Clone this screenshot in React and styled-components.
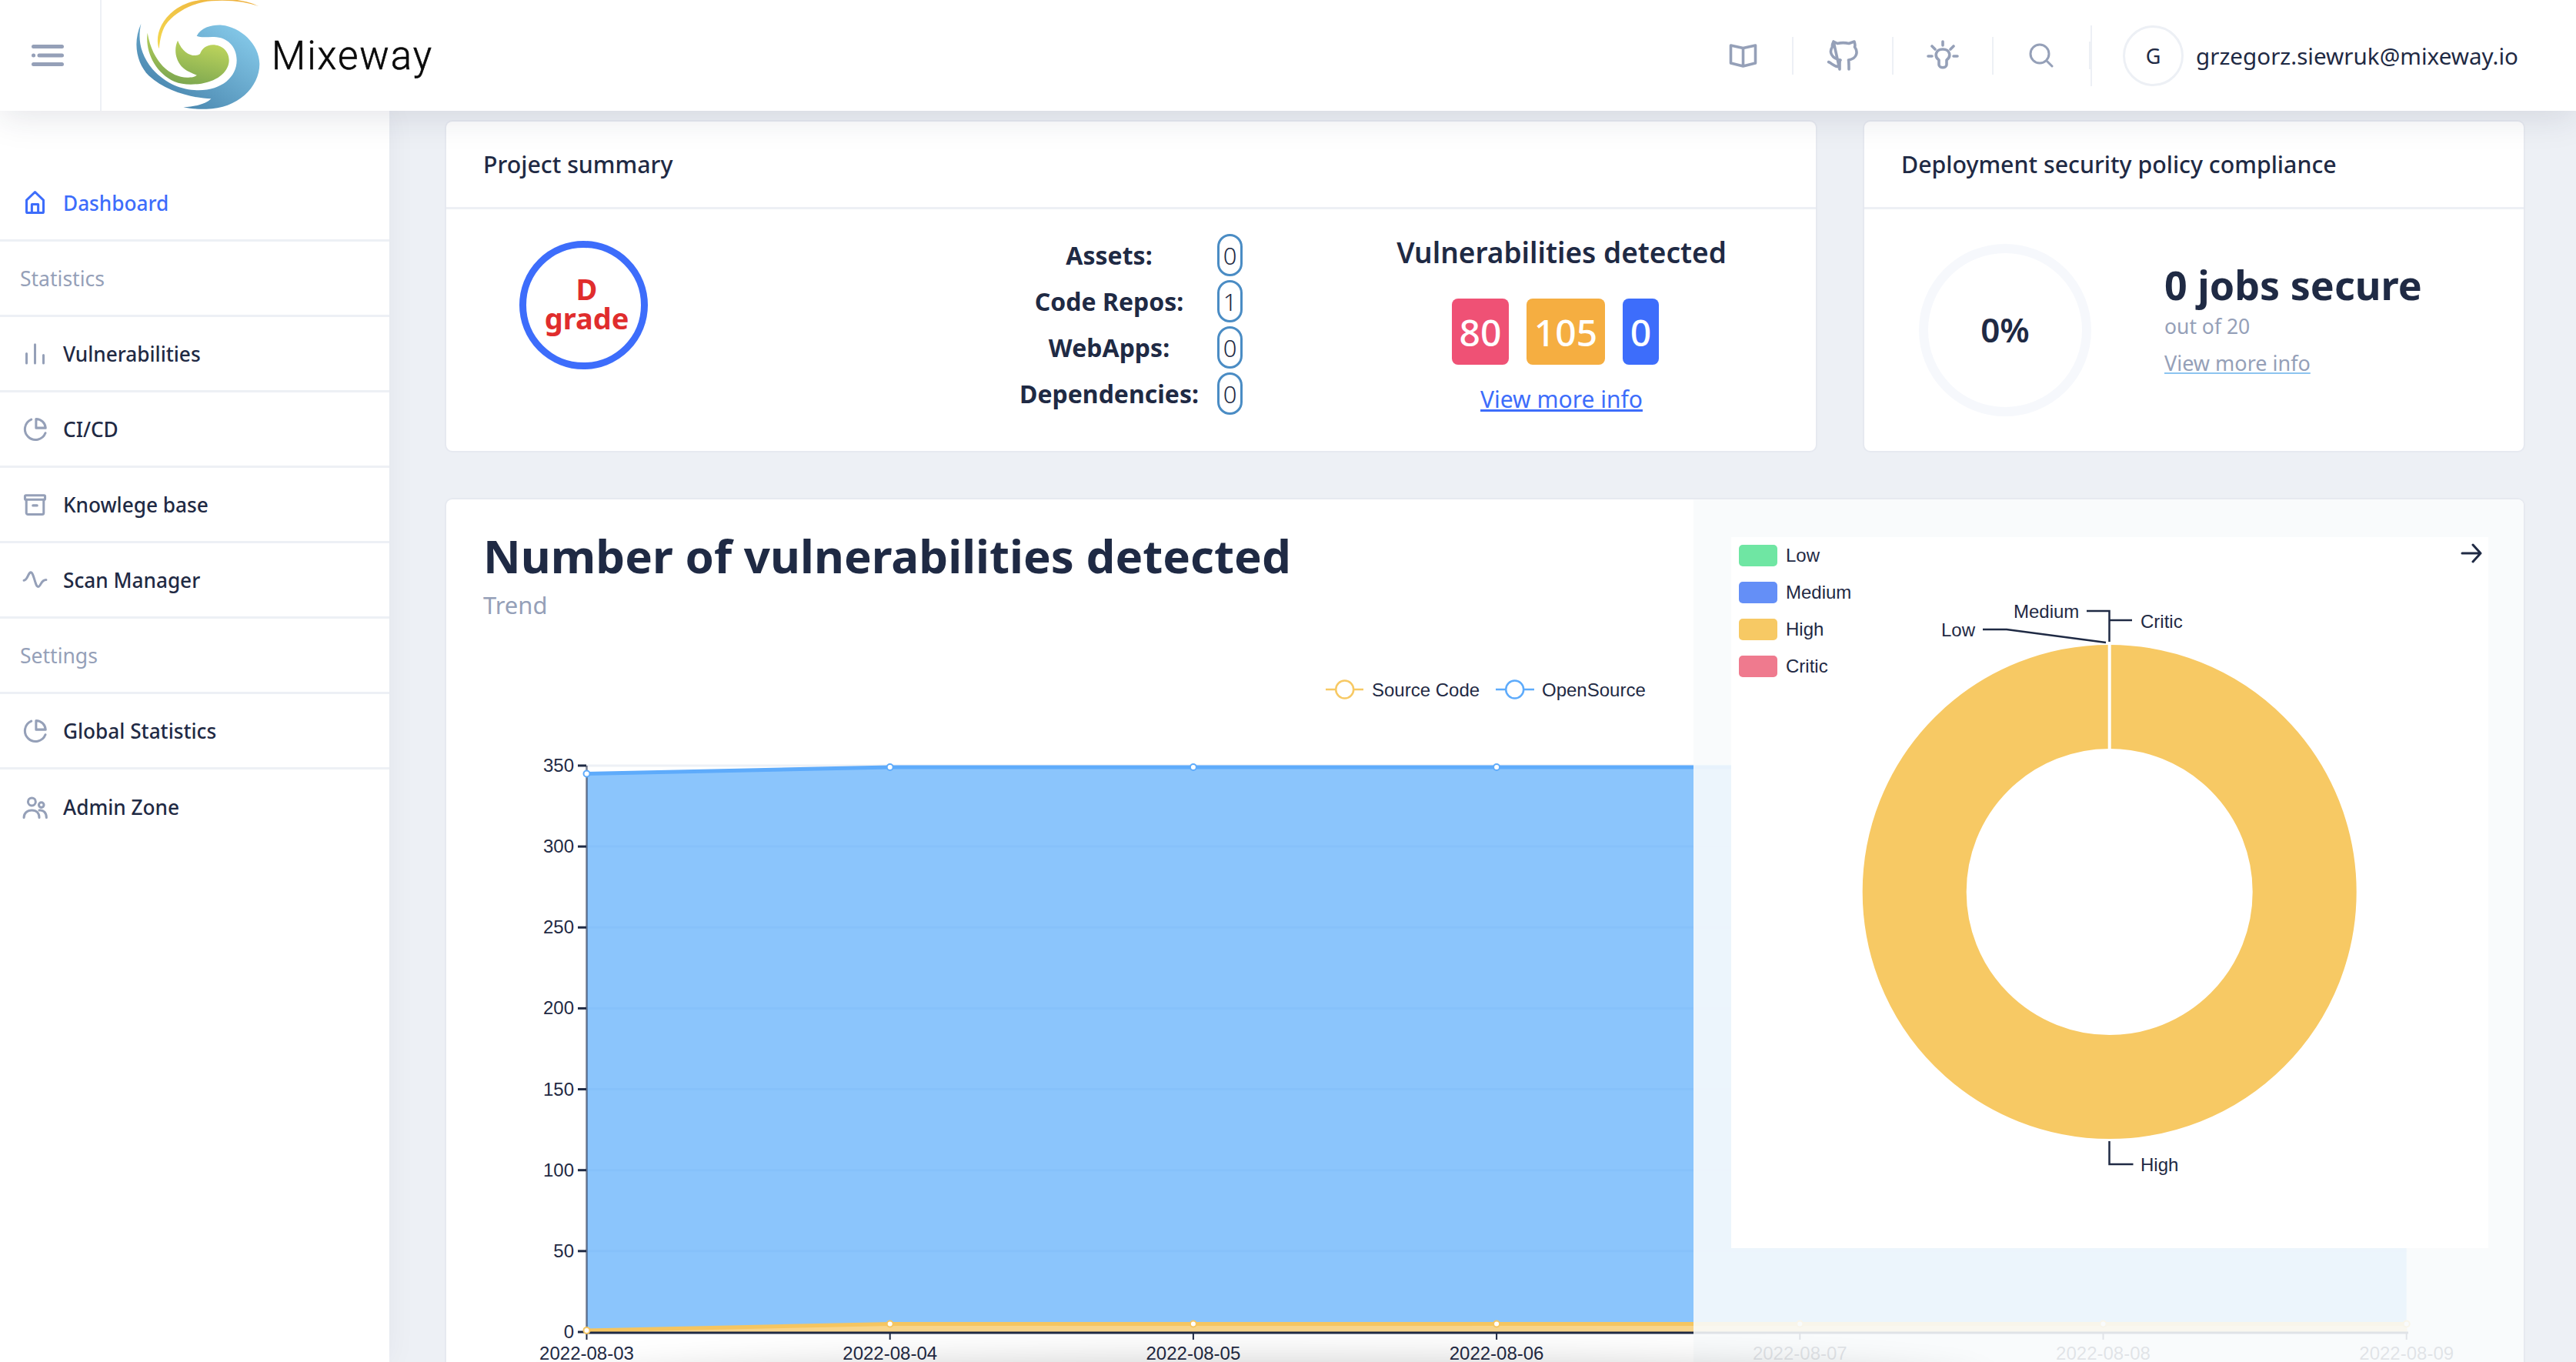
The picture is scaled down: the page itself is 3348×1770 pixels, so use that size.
import React from 'react';
import styled, {createGlobalStyle} from "styled-components";

const INK = '#1f2a44';
const MUTED = '#95a0b8';
const BLUE = '#3d6dfb';
const LINE = '#edf0f5';
const SANS = '"Noto Sans", "Open Sans", sans-serif';
const ARIAL = '"Liberation Sans", Arial, sans-serif';

const GlobalStyle = createGlobalStyle`
    html, body {
        margin: 0;
        padding: 0;
        background: #edf0f5;
        font-family: ${SANS};
        color: ${INK};
    }
`
const Page = styled.div`
    position: relative;
    width: 3348px;
    height: 1770px;
    overflow: hidden;
    display: flex;
    flex-direction: column;
`
const TopBar = styled.header`
    position: relative;
    z-index: 3;
    flex: 0 0 144px;
    display: flex;
    align-items: stretch;
    background: #fff;
    box-shadow: 0 6px 44px rgba(30, 40, 70, 0.13);
`
const MenuCell = styled.div`
    flex: 0 0 132px;
    box-sizing: border-box;
    display: flex;
    align-items: center;
    padding-left: 41px;
    border-right: 2px solid ${LINE};
`
const Brand = styled.div`
    display: flex;
    align-items: center;
    margin-left: 44px;
`
const LogoMark = styled.svg`
    width: 162px;
    height: 144px;
    display: block;
`
const BrandName = styled.span`
    margin-left: 15px;
    font-family: Roboto, sans-serif;
    font-weight: 300;
    font-size: 51px;
    letter-spacing: 2px;
    color: #0a0a0a;
    -webkit-text-stroke: 0.6px #0a0a0a;
`
const TopRight = styled.div`
    margin-left: auto;
    flex: 0 0 1147px;
    display: flex;
    align-items: center;
`
const ToolCell = styled.div`
    flex: 0 0 ${p => p.$w}px;
    height: ${p => p.$h}px;
    box-sizing: border-box;
    display: flex;
    align-items: center;
    justify-content: center;
    border-right: 2px solid ${LINE};
`
const UserBox = styled.div`
    display: flex;
    align-items: center;
    margin-left: 40px;
    gap: 16px;
`
const Avatar = styled.div`
    width: 79px;
    height: 79px;
    box-sizing: border-box;
    border: 3px solid ${LINE};
    border-radius: 50%;
    display: flex;
    align-items: center;
    justify-content: center;
    font-size: 27px;
`
const Email = styled.span`
    font-size: 29.6px;
    white-space: nowrap;
`
const Body = styled.div`
    flex: 1;
    display: flex;
    min-height: 0;
`
const Sidebar = styled.nav`
    position: relative;
    z-index: 2;
    flex: 0 0 506px;
    box-sizing: border-box;
    padding-top: 72px;
    background: #fff;
    box-shadow: 0 0 36px rgba(30, 40, 70, 0.05);
`
const NavRow = styled.div`
    height: 98px;
    box-sizing: border-box;
    display: flex;
    align-items: center;
    gap: 20px;
    padding-left: 29px;
    border-bottom: ${p => p.$last ? 'none' : `3px solid ${LINE}`};
    font-size: 26.2px;
    font-weight: 500;
    color: ${p => p.$active ? BLUE : INK};
`
const NavLabel = styled.div`
    height: 98px;
    box-sizing: border-box;
    display: flex;
    align-items: center;
    padding-left: 26px;
    border-bottom: 3px solid ${LINE};
    font-size: 26.5px;
    color: ${MUTED};
`
const NavIcon = styled.svg`
    width: 33px;
    height: 33px;
    flex: none;
    fill: none;
    stroke: ${p => p.$active ? BLUE : MUTED};
    stroke-width: 2.2;
    stroke-linecap: round;
    stroke-linejoin: round;
`
const Main = styled.main`
    flex: 1;
    min-width: 0;
    box-sizing: border-box;
    padding: 14px 68px 0 74px;
`
const TopCards = styled.div`
    display: grid;
    grid-template-columns: 1780px 857px;
    column-gap: 63px;
    margin-bottom: 63px;
`
const Card = styled.section`
    position: relative;
    box-sizing: border-box;
    background: #fff;
    border-radius: 8px;
    box-shadow: 0 0 0 2px #e6e9f0;
`
const SummaryCard = styled(Card)`
    height: 428px;
`
const CardHead = styled.div`
    height: 114px;
    box-sizing: border-box;
    display: flex;
    align-items: center;
    padding-left: 48px;
    border-bottom: 3px solid ${LINE};
    font-size: 30.3px;
    font-weight: 500;
`
const SummaryBody = styled.div`
    display: grid;
    grid-template-columns: 800px 412px 1fr;
    height: 314px;
`
const GradeCell = styled.div`
    padding: 41px 0 0 95px;
`
const GradeRing = styled.div`
    width: 167px;
    height: 167px;
    box-sizing: border-box;
    border: 9px solid ${BLUE};
    border-radius: 50%;
    display: flex;
    flex-direction: column;
    align-items: center;
    justify-content: center;
    color: #e02d2d;
    font-size: 38px;
    font-weight: 700;
    line-height: 38px;
    padding: 0 0 6px 8px;
`
const StatsGrid = styled.div`
    display: grid;
    grid-template-columns: 125px 33px;
    grid-auto-rows: 55px;
    row-gap: 5px;
    column-gap: 78px;
    padding: 32px 0 0 0;
    margin-left: -33px;
    width: 300px;
    justify-content: center;
`
const StatLabel = styled.div`
    display: flex;
    align-items: center;
    justify-content: center;
    font-size: 32px;
    font-weight: 700;
    white-space: nowrap;
`
const StatPill = styled.div`
    box-sizing: border-box;
    border: 3px solid #4a8cc4;
    border-radius: 17px;
    display: flex;
    align-items: center;
    justify-content: center;
    font-size: 31px;
    font-weight: 300;
`
const VulnBox = styled.div`
    display: flex;
    flex-direction: column;
    align-items: center;
    padding: 31px 0 0 0;
    margin-left: 22px;
    width: 431px;
`
const VulnTitle = styled.div`
    font-size: 37px;
    font-weight: 600;
    line-height: 50px;
    white-space: nowrap;
`
const BadgeRow = styled.div`
    display: flex;
    gap: 23px;
    margin: 35px 16px 0 0;
`
const Badge = styled.div`
    width: ${p => p.$w}px;
    height: 86px;
    border-radius: 8px;
    background: ${p => p.$bg};
    color: #fff;
    display: flex;
    align-items: center;
    justify-content: center;
    font-size: 48px;
    font-weight: 500;
`
const MoreLink = styled.a`
    margin-top: 25px;
    font-size: 30px;
    line-height: 40px;
    color: ${BLUE};
    text-decoration: underline;
`
const PolicyBody = styled.div`
    display: flex;
    align-items: center;
    height: 314px;
    padding-left: 71px;
`
const GaugeRing = styled.div`
    width: 224px;
    height: 224px;
    box-sizing: border-box;
    border: 12px solid #f6f8fc;
    border-radius: 50%;
    display: flex;
    align-items: center;
    justify-content: center;
    font-size: 44px;
    font-weight: 600;
    padding-bottom: 2px;
`
const PolicyText = styled.div`
    margin: 0 0 32px 95px;
    display: flex;
    flex-direction: column;
`
const JobsCount = styled.div`
    font-size: 52px;
    font-weight: 700;
    line-height: 66px;
    white-space: nowrap;
`
const OutOf = styled.div`
    margin-top: 2px;
    font-size: 26.5px;
    line-height: 38px;
    color: ${MUTED};
`
const PolicyLink = styled.a`
    margin-top: 11px;
    align-self: flex-start;
    font-size: 27px;
    line-height: 36px;
    color: ${MUTED};
    text-decoration: underline;
    text-decoration-color: #8cc4f0;
`
const TrendCard = styled(Card)`
    height: 1200px;
`
const TrendHead = styled.div`
    height: 201px;
    box-sizing: border-box;
    padding: 35px 0 0 48px;
`
const TrendTitle = styled.h1`
    margin: 0;
    font-size: 60px;
    font-weight: 700;
    line-height: 76px;
    white-space: nowrap;
`
const TrendSub = styled.div`
    margin-top: 5px;
    font-size: 31px;
    line-height: 42px;
    color: ${MUTED};
`
const ChartSvg = styled.svg`
    display: block;
    width: 2700px;
    height: 940px;
    font-family: ${ARIAL};
`
const DrawerPanel = styled.aside`
    position: absolute;
    top: 0;
    right: 0;
    bottom: 0;
    width: 1079px;
    box-sizing: border-box;
    padding: 49px 0 0 49px;
    border-radius: 0 8px 0 0;
    background: rgba(248, 250, 252, 0.89);
`
const DonutBox = styled.div`
    position: relative;
    width: 984px;
    height: 924px;
    background: #fff;
`
const DonutSvg = styled.svg`
    display: block;
    width: 984px;
    height: 924px;
    font-family: ${ARIAL};
`
const CloseArrow = styled.svg`
    position: absolute;
    top: 7px;
    right: 8px;
    width: 28px;
    height: 28px;
    fill: none;
    stroke: ${INK};
    stroke-width: 3;
    stroke-linecap: round;
    stroke-linejoin: round;
`
const BottomGlow = styled.div`
    position: absolute;
    z-index: 4;
    left: 720px;
    right: 780px;
    top: 1782px;
    height: 60px;
    border-radius: 50%;
    box-shadow: 0 0 50px 12px rgba(0, 0, 0, 0.2);
`

const TOOL = {fill: 'none', stroke: MUTED, strokeWidth: 3.6, strokeLinecap: 'round', strokeLinejoin: 'round'};

const Logo = () => (
    <LogoMark viewBox="83 0 486 432">
        <defs>
            <linearGradient id="lgBlue" x1="1" y1="0.2" x2="0.2" y2="1">
                <stop offset="0" stopColor="#84c8e8"/>
                <stop offset="1" stopColor="#437fa8"/>
            </linearGradient>
            <linearGradient id="lgGreen" x1="0.8" y1="0.2" x2="0.5" y2="1">
                <stop offset="0" stopColor="#bdd45c"/>
                <stop offset="1" stopColor="#7ea850"/>
            </linearGradient>
            <linearGradient id="lgYellow" x1="0" y1="1" x2="1" y2="0">
                <stop offset="0" stopColor="#f3d94f"/>
                <stop offset="1" stopColor="#eeae3e"/>
            </linearGradient>
        </defs>
        <path fill="url(#lgYellow)" d="M175 190C160 150 175 85 235 40C290 0 340 -4 430 -4C490 -2 530 8 565 25C520 8 450 -2 380 4C310 10 250 40 210 85C185 115 180 150 175 190Z"/>
        <path fill="url(#lgBlue)" d="M322 140C340 105 385 96 420 98C490 104 567 170 567 250C567 340 480 425 360 425C330 426 295 424 270 418C320 415 360 405 378 385C300 382 200 355 135 295C90 250 70 170 105 92C92 150 100 210 150 270C205 330 270 352 330 352C420 352 478 300 478 235C478 180 440 145 390 144C365 143 340 148 322 140Z"/>
        <path fill="url(#lgGreen)" d="M248 158C235 185 235 225 262 258C280 278 305 285 322 293C315 300 300 302 285 302C220 300 150 245 130 128C120 200 160 285 235 318C265 330 300 332 340 326C410 315 448 275 448 235C448 200 420 175 385 175C360 175 342 190 335 210C315 225 270 215 248 158Z"/>
    </LogoMark>
);

const Hamburger = () => (
    <svg width="42" height="28" viewBox="0 0 42 28" fill="none" stroke={MUTED} strokeWidth="5" strokeLinecap="round">
        <path d="M2.5 2.5h37M10 14h29.5M2.5 25.5h37"/>
        <path d="M2.5 14h.1"/>
    </svg>
);

const NAV_ICONS = {
    home: <path d="M4 20.5V9.6L12 1.8l8 7.8v10.9a1 1 0 0 1-1 1H5a1 1 0 0 1-1-1zM9 21.5v-8h6v8"/>,
    bars: <path d="M4 21v-9M12 21V3.5M20 21v-7.5"/>,
    pie: <><path d="M21.8 15.8A10 10 0 1 1 8.5 3"/><path d="M13 2.5v8.5h9A9 9 0 0 0 13 2.5z"/></>,
    archive: <><rect x="2.5" y="3.5" width="19" height="4" rx="1"/><path d="M3.8 7.5V20a1.5 1.5 0 0 0 1.5 1.5h13.4a1.5 1.5 0 0 0 1.5-1.5V7.5M10 13h4"/></>,
    pulse: <path d="M1.5 12.5C5 12.5 5.5 5 8 5c3 0 4 13.5 7 13.5 2.5 0 2.5-6.5 7.5-6.5"/>,
    users: <><circle cx="9" cy="6.5" r="3.6"/><circle cx="18" cy="9.5" r="2.4"/><path d="M1.5 21.5c0-4.2 3-7 7.5-7s7 2.8 7 7M16 14.6c4-.6 6.8 2.2 6.8 6.9"/></>,
};

const NavItem = ({icon, active, last, children}) => (
    <NavRow $active={active} $last={last}>
        <NavIcon viewBox="0 0 24 24" $active={active}>{NAV_ICONS[icon]}</NavIcon>
        {children}
    </NavRow>
);

const STATS = [['Assets:', 0], ['Code Repos:', 1], ['WebApps:', 0], ['Dependencies:', 0]];

const DAYS = ['2022-08-03', '2022-08-04', '2022-08-05', '2022-08-06', '2022-08-07', '2022-08-08', '2022-08-09'];
const xAt = (i) => 762.5 + 394.2 * i;
const yAt = (v) => 1731 - v * 2.103;
const openTop = [345, 349, 349, 349, 349, 349, 349];
const codeTop = [1, 5, 5, 5, 5, 5, 5];

const TrendChart = () => {
    const codePts = codeTop.map((v, i) => `${xAt(i)} ${yAt(v)}`);
    const openPts = openTop.map((v, i) => `${xAt(i)} ${yAt(v)}`);
    const lower = [...codePts].reverse();
    return (
        <ChartSvg viewBox="580 850 2700 940">
            {[50, 100, 150, 200, 250, 300, 350].map(v => (
                <line key={v} x1="762" x2="3129" y1={yAt(v)} y2={yAt(v)} stroke="#eef1f6" strokeWidth="3"/>
            ))}
            <path d={`M${openPts.join('L')}L${lower.join('L')}Z`} fill="#5eaefb" fillOpacity="0.72"/>
            <path d={`M${codePts.join('L')}L3129 1731L762 1731Z`} fill="#f5c560" fillOpacity="0.72"/>
            <polyline points={openPts.join(' ')} fill="none" stroke="#5eabfb" strokeWidth="5"/>
            <polyline points={codePts.join(' ')} fill="none" stroke="#f5c560" strokeWidth="5"/>
            <line x1="762.5" x2="762.5" y1="995" y2="1733" stroke={INK} strokeOpacity="0.6" strokeWidth="2.5"/>
            <line x1="762" x2="3130" y1="1732" y2="1732" stroke={INK} strokeWidth="3"/>
            {[0, 50, 100, 150, 200, 250, 300, 350].map(v => (
                <g key={v}>
                    <line x1="751" x2="762" y1={yAt(v)} y2={yAt(v)} stroke={INK} strokeWidth="3"/>
                    <text x="746" y={yAt(v) + 8} textAnchor="end" fontSize="24" fill={INK}>{v}</text>
                </g>
            ))}
            {DAYS.map((d, i) => (
                <g key={d}>
                    <line x1={xAt(i)} x2={xAt(i)} y1="1733" y2="1741" stroke={INK} strokeWidth="2"/>
                    <text x={xAt(i)} y="1767" textAnchor="middle" fontSize="24" fill={INK}>{d}</text>
                    <circle cx={xAt(i)} cy={yAt(openTop[i])} r="4" fill="#fff" stroke="#5eabfb" strokeWidth="2"/>
                    <circle cx={xAt(i)} cy={yAt(codeTop[i])} r="4" fill="#fff" stroke="#f5c560" strokeWidth="2"/>
                </g>
            ))}
            <g fill="none" strokeWidth="2.5">
                <path d="M1723 896h49" stroke="#f7c964"/>
                <circle cx="1747.7" cy="896" r="11.5" fill="#fff" stroke="#f7c964"/>
                <path d="M1944 896h50" stroke="#5eabfb"/>
                <circle cx="1968.7" cy="896" r="11.5" fill="#fff" stroke="#5eabfb"/>
            </g>
            <text x="1783" y="905" fontSize="24" fill={INK}>Source Code</text>
            <text x="2004" y="905" fontSize="24" fill={INK}>OpenSource</text>
        </ChartSvg>
    );
};

const PIE_LEGEND = [['Low', '#6fe6a3'], ['Medium', '#648ff7'], ['High', '#f7c964'], ['Critic', '#ef7a8e']];

const DonutChart = () => (
    <DonutSvg viewBox="2250 698 984 924">
        {PIE_LEGEND.map(([name, color], i) => (
            <g key={name}>
                <rect x="2260" y={708 + i * 48} width="50" height="28" rx="5" fill={color}/>
                <text x="2321" y={730 + i * 48} fontSize="24" fill={INK}>{name}</text>
            </g>
        ))}
        <circle cx="2741.7" cy="1159" r="253.5" fill="none" stroke="#f7c964" strokeWidth="135"/>
        <line x1="2741.7" x2="2741.7" y1="836" y2="975" stroke="#fff" strokeWidth="4"/>
        <g fill="none" stroke={INK} strokeWidth="2.5">
            <path d="M2712 794h29.5v40"/>
            <path d="M2742 806h29"/>
            <path d="M2577 818h31l129 17"/>
            <path d="M2741.5 1483v30h31"/>
        </g>
        <text x="2617" y="803" fontSize="24" fill={INK}>Medium</text>
        <text x="2782" y="816" fontSize="24" fill={INK}>Critic</text>
        <text x="2523" y="827" fontSize="24" fill={INK}>Low</text>
        <text x="2782" y="1522" fontSize="24" fill={INK}>High</text>
    </DonutSvg>
);

const App = () => {
    return (
        <Page>
            <GlobalStyle/>
            <TopBar>
                <MenuCell><Hamburger/></MenuCell>
                <Brand>
                    <Logo/>
                    <BrandName>Mixeway</BrandName>
                </Brand>
                <TopRight>
                    <ToolCell $w={130} $h={49}>
                        <svg width="37" height="33" viewBox="0 0 37 33" {...TOOL}><path d="M2.5 3l16 3.5L34.5 3v23l-16 4-16-4zM18.5 6.5V30"/></svg>
                    </ToolCell>
                    <ToolCell $w={130} $h={49}>
                        <svg width="41" height="40" viewBox="0 0 41 40" {...TOOL}><path d="M8 2l5 2.500c4-.9 11-.9 15 0L35 2c1 3 1 6 .5 7 4.500 6 3.500 15-8 17 .5 2 .5 4 .5 12M16 38v-7c0-2 0-4 1-5C5 24 2 15 6.500 9 6 7 7 4 8 2zM1.500 28.500C6 30 8 35 16 35"/></svg>
                    </ToolCell>
                    <ToolCell $w={130} $h={49}>
                        <svg width="42" height="40" viewBox="0 0 42 40" {...TOOL}><path d="M21 2v5M7 8l4 4M35 8l-4 4M2 21h5M35 21h5M16 32v-6c-6-4-5-14 5-14s11 10 5 14v6c0 5-10 5-10 0z"/></svg>
                    </ToolCell>
                    <ToolCell $w={126} $h={36}>
                        <svg width="32" height="32" viewBox="0 0 32 32" {...TOOL} strokeWidth="3"><circle cx="14" cy="14" r="12"/><path d="M23.500 23.500L30 30"/></svg>
                    </ToolCell>
                    <ToolCell $w={0} $h={79}/>
                    <UserBox>
                        <Avatar>G</Avatar>
                        <Email>grzegorz.siewruk@mixeway.io</Email>
                    </UserBox>
                </TopRight>
            </TopBar>
            <Body>
                <Sidebar>
                    <NavItem icon="home" active>Dashboard</NavItem>
                    <NavLabel>Statistics</NavLabel>
                    <NavItem icon="bars">Vulnerabilities</NavItem>
                    <NavItem icon="pie">CI/CD</NavItem>
                    <NavItem icon="archive">Knowlege base</NavItem>
                    <NavItem icon="pulse">Scan Manager</NavItem>
                    <NavLabel>Settings</NavLabel>
                    <NavItem icon="pie">Global Statistics</NavItem>
                    <NavItem icon="users" last>Admin Zone</NavItem>
                </Sidebar>
                <Main>
                    <TopCards>
                        <SummaryCard>
                            <CardHead>Project summary</CardHead>
                            <SummaryBody>
                                <GradeCell>
                                    <GradeRing><span>D</span><span>grade</span></GradeRing>
                                </GradeCell>
                                <StatsGrid>
                                    {STATS.map(([label, count]) => (
                                        <React.Fragment key={label}>
                                            <StatLabel>{label}</StatLabel>
                                            <StatPill>{count}</StatPill>
                                        </React.Fragment>
                                    ))}
                                </StatsGrid>
                                <VulnBox>
                                    <VulnTitle>Vulnerabilities detected</VulnTitle>
                                    <BadgeRow>
                                        <Badge $w={74} $bg="#ef5175">80</Badge>
                                        <Badge $w={102} $bg="#f5ae41">105</Badge>
                                        <Badge $w={47} $bg={BLUE}>0</Badge>
                                    </BadgeRow>
                                    <MoreLink>View more info</MoreLink>
                                </VulnBox>
                            </SummaryBody>
                        </SummaryCard>
                        <SummaryCard>
                            <CardHead>Deployment security policy compliance</CardHead>
                            <PolicyBody>
                                <GaugeRing>0%</GaugeRing>
                                <PolicyText>
                                    <JobsCount>0 jobs secure</JobsCount>
                                    <OutOf>out of 20</OutOf>
                                    <PolicyLink>View more info</PolicyLink>
                                </PolicyText>
                            </PolicyBody>
                        </SummaryCard>
                    </TopCards>
                    <TrendCard>
                        <TrendHead>
                            <TrendTitle>Number of vulnerabilities detected</TrendTitle>
                            <TrendSub>Trend</TrendSub>
                        </TrendHead>
                        <TrendChart/>
                        <DrawerPanel>
                            <DonutBox>
                                <DonutChart/>
                                <CloseArrow viewBox="0 0 28 28"><path d="M2 14h24M16 3l10 11-10 11"/></CloseArrow>
                            </DonutBox>
                        </DrawerPanel>
                    </TrendCard>
                </Main>
            </Body>
            <BottomGlow/>
        </Page>
    );
};

export default App;
